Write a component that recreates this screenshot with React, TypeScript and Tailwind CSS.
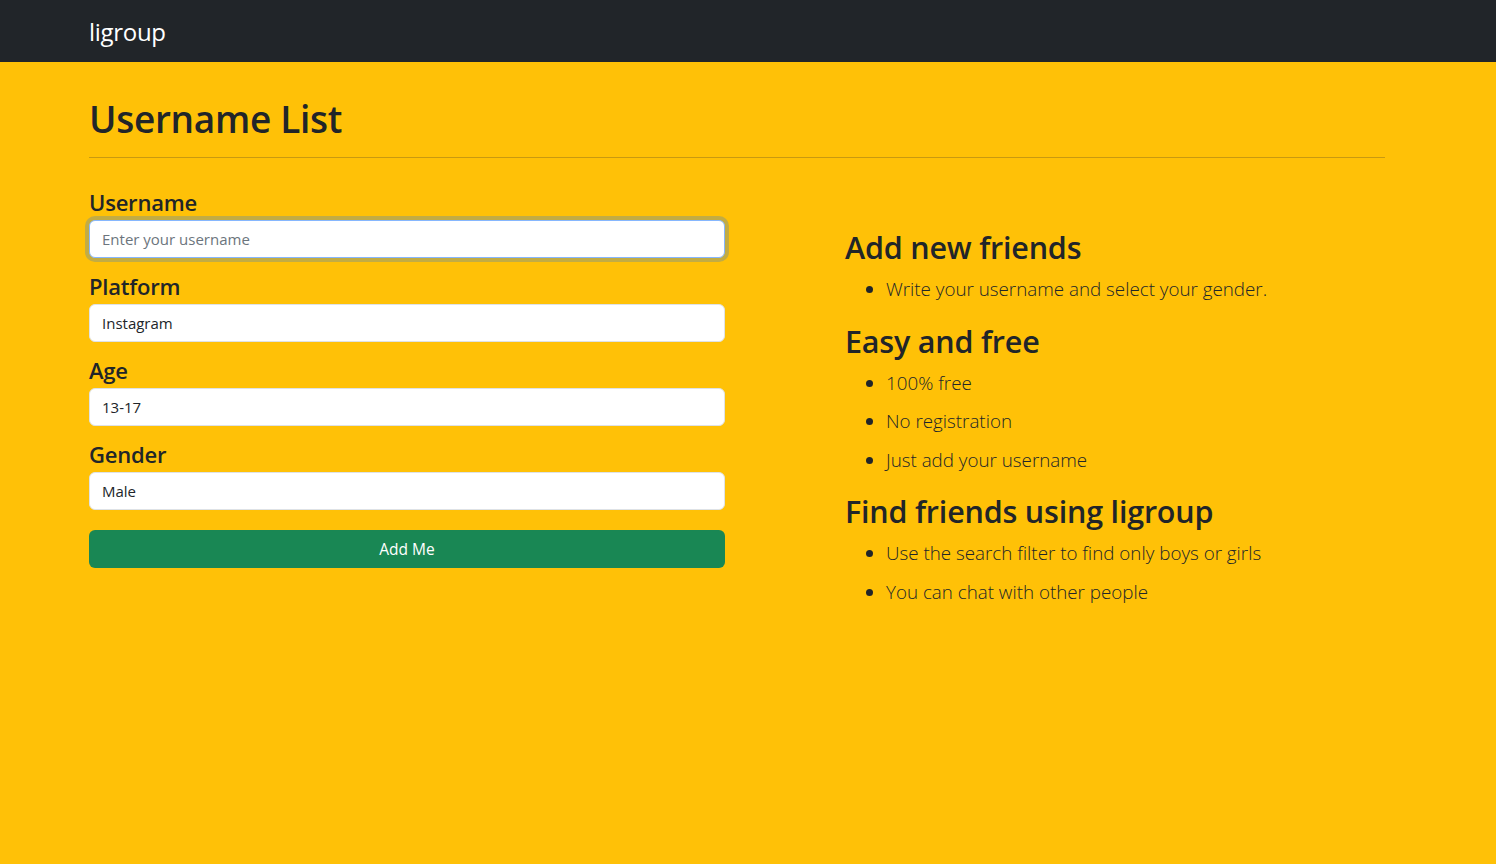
import { useState } from "react";

const font = { fontFamily: '"Open Sans", "Noto Sans", sans-serif' };

const fields = [
  { label: "Username", value: "", placeholder: "Enter your username", focused: true },
  { label: "Platform", value: "Instagram" },
  { label: "Age", value: "13-17" },
  { label: "Gender", value: "Male" },
];

const sections = [
  { title: "Add new friends", items: ["Write your username and select your gender."] },
  { title: "Easy and free", items: ["100% free", "No registration", "Just add your username"] },
  {
    title: "Find friends using ligroup",
    items: ["Use the search filter to find only boys or girls", "You can chat with other people"],
  },
];

const App = () => {
  const [values, setValues] = useState(fields.map((f) => f.value));

  return (
    <div className="min-h-screen bg-[#ffc107] text-[#212529]" style={font}>
      <nav className="h-[62px] bg-[#212529] flex items-center">
        <div className="w-[1296px] ml-[89px] pt-[4px]">
          <a href="#" className="text-white text-[24px] leading-none tracking-[-0.3px]">
            ligroup
          </a>
        </div>
      </nav>

      <main className="w-[1296px] ml-[89px]">
        <h1 className="pt-[33px] text-[37px] leading-[48px] font-semibold tracking-[-0.3px]">Username List</h1>
        <hr className="mt-[14px] border-0 h-px bg-[#c99a10]" />

        <div className="flex mt-[26px]">
          <form className="w-[636px]" onSubmit={(e) => e.preventDefault()}>
            {fields.map((f, i) => (
              <div key={f.label} className="mb-[10px]">
                <label className="block text-[22px] leading-[36px] font-semibold tracking-[-0.2px]">{f.label}</label>
                <input
                  type="text"
                  value={values[i]}
                  placeholder={f.placeholder}
                  onChange={(e) => {
                    const next = [...values];
                    next[i] = e.target.value;
                    setValues(next);
                  }}
                  className={`block w-full h-[38px] px-3 bg-white rounded-[6px] border text-[15px] text-[#212529] placeholder:text-[#6c757d] outline-none ${
                    f.focused ? "border-[#86b7fe] shadow-[0_0_0_4px_rgba(13,110,253,0.25)]" : "border-[#dee2e6]"
                  }`}
                />
              </div>
            ))}
            <button
              type="submit"
              className="mt-[10px] w-full h-[38px] pt-[1px] rounded-[6px] bg-[#198754] text-white text-[15.5px]"
            >
              Add Me
            </button>
          </form>

          <div className="ml-[120px] mt-[46px]">
            {sections.map((s) => (
              <div key={s.title} className="mb-[15px]">
                <h3 className="text-[30.5px] leading-[34px] font-semibold mb-[6px] tracking-[-0.2px]">{s.title}</h3>
                <ul className="list-disc pl-[41px]">
                  {s.items.map((it) => (
                    <li key={it} className="text-[18.8px] leading-[38.5px] font-light">
                      {it}
                    </li>
                  ))}
                </ul>
              </div>
            ))}
          </div>
        </div>
      </main>
    </div>
  );
};

export default App;
